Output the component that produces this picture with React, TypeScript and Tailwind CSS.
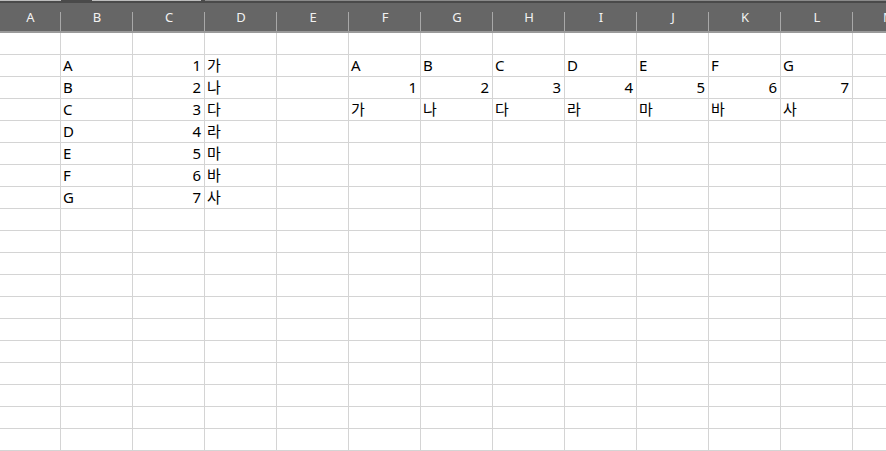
import React from 'react';

const COLS = ['A', 'B', 'C', 'D', 'E', 'F', 'G', 'H', 'I', 'J', 'K', 'L', 'M'];
const ROW_COUNT = 19;

type Cell = { v: string; num?: boolean };

// sheet contents keyed by "row-col"
const data: Record<string, Cell> = {};
const letters = ['A', 'B', 'C', 'D', 'E', 'F', 'G'];
const hangul = ['가', '나', '다', '라', '마', '바', '사'];

letters.forEach((l, i) => {
  data[`${i + 1}-B`] = { v: l };
  data[`${i + 1}-C`] = { v: String(i + 1), num: true };
  data[`${i + 1}-D`] = { v: hangul[i] };
  const col = COLS[5 + i];
  data[`1-${col}`] = { v: l };
  data[`2-${col}`] = { v: String(i + 1), num: true };
  data[`3-${col}`] = { v: hangul[i] };
});

const colWidth = (c: string) => (c === 'A' ? 'w-[61px]' : c === 'M' ? 'w-[72px]' : 'w-[72px]');

const App: React.FC = () => {
  return (
    <div className="w-[886px] h-[451px] overflow-hidden bg-white font-['Noto_Sans','Noto_Sans_CJK_KR',sans-serif]">
      {/* strip of the tab bar above */}
      <div className="flex h-[3px] bg-[#4a4a4a]">
        <div className="w-[61px] h-[1px] bg-[#bdbdbd]" />
        <div className="w-[31px]" />
        <div className="w-[109px] h-[1px] bg-[#bdbdbd]" />
        <div className="w-[4px]" />
        <div className="flex-1 h-[1px] bg-[#8a8a8a]" />
      </div>

      {/* column header */}
      <div className="flex h-[30px] bg-[#666666] border-b-2 border-[#9a9a9a]">
        {COLS.map((c) => (
          <div key={c} className={`${colWidth(c)} shrink-0 relative flex items-center justify-center text-[13px] text-[#f2f2f2] pt-[2px]`}>
            {c}
            <span className="absolute right-0 bottom-0 h-[19px] w-px bg-[#a8a8a8]" />
          </div>
        ))}
      </div>

      {/* grid */}
      <div className="flex flex-col">
        {Array.from({ length: ROW_COUNT }).map((_, r) => (
          <div key={r} className="flex h-[22px]">
            {COLS.map((c) => {
              const cell = data[`${r}-${c}`];
              return (
                <div
                  key={c}
                  className={`${colWidth(c)} shrink-0 border-r border-b border-[#d4d4d4] flex items-end pb-[1px] text-[15px] leading-[20px] text-black whitespace-nowrap ${cell?.num ? 'justify-end pr-[3px]' : 'pl-[2px]'}`}
                >
                  {cell?.v}
                </div>
              );
            })}
          </div>
        ))}
      </div>
    </div>
  );
};

export default App;
